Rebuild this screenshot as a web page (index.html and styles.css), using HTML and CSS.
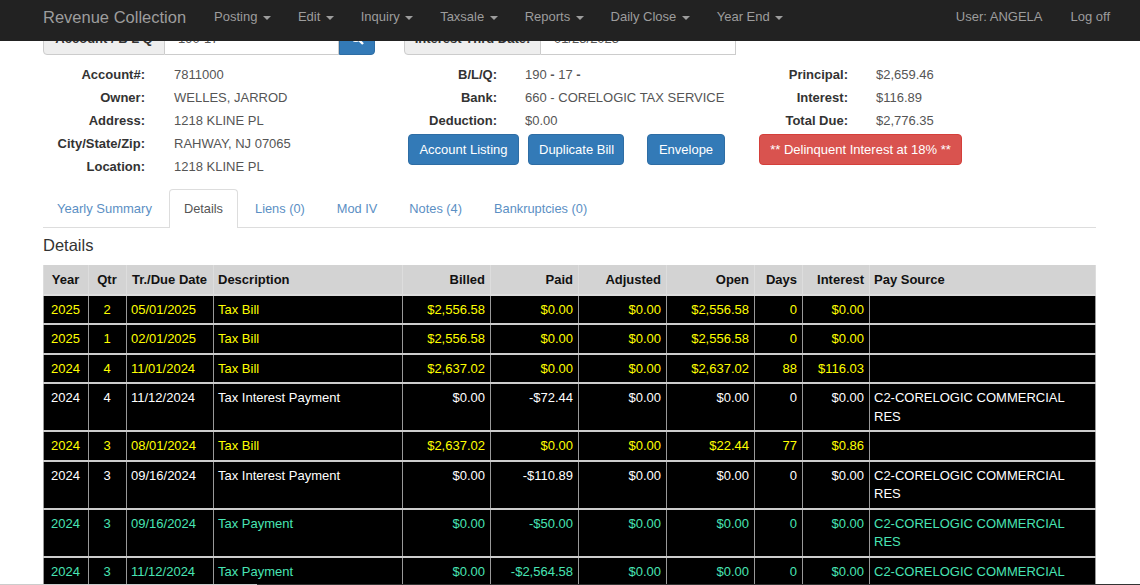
FILE: index.html
```html
<!DOCTYPE html>
<html>
<head>
  <meta charset="UTF-8">
  <title>Revenue Collection</title>
  <link rel="stylesheet" href="styles.css">
</head>
<body>
  <!-- Top navigation, sits over the scrolled page -->
  <nav class="navbar">
    <a class="brand">Revenue Collection</a>
    <ul class="nav-menu">
      <li>Posting <span class="caret"></span></li>
      <li>Edit <span class="caret"></span></li>
      <li>Inquiry <span class="caret"></span></li>
      <li>Taxsale <span class="caret"></span></li>
      <li>Reports <span class="caret"></span></li>
      <li>Daily Close <span class="caret"></span></li>
      <li>Year End <span class="caret"></span></li>
    </ul>
    <ul class="nav-right">
      <li>User: ANGELA</li>
      <li>Log off</li>
    </ul>
  </nav>

  <div class="page">
    <div class="search-row">
      <div class="input-group group-account">
        <span class="addon addon-account">Account / B L Q</span>
        <span class="field">190-17</span>
        <span class="search-btn">
          <svg width="14" height="14" viewBox="0 0 14 14"><circle cx="5.8" cy="5.8" r="4.2" fill="none" stroke="#fff" stroke-width="2"/><path d="M8.8 8.8L13 13" stroke="#fff" stroke-width="2.4"/></svg>
        </span>
      </div>
      <div class="input-group group-date">
        <span class="addon addon-date">Interest Thru Date:</span>
        <span class="field">01/25/2025</span>
      </div>
    </div>

    <div class="info">
      <dl class="facts facts-account">
        <dt>Account#:</dt><dd>7811000</dd>
        <dt>Owner:</dt><dd>WELLES, JARROD</dd>
        <dt>Address:</dt><dd>1218 KLINE PL</dd>
        <dt>City/State/Zip:</dt><dd>RAHWAY, NJ 07065</dd>
        <dt>Location:</dt><dd>1218 KLINE PL</dd>
      </dl>
      <div class="info-right">
        <div class="info-columns">
          <dl class="facts facts-bill">
            <dt>B/L/Q:</dt><dd>190 <b>-</b> 17 <b>-</b></dd>
            <dt>Bank:</dt><dd>660 - CORELOGIC TAX SERVICE</dd>
            <dt>Deduction:</dt><dd>$0.00</dd>
          </dl>
          <dl class="facts facts-due">
            <dt>Principal:</dt><dd>$2,659.46</dd>
            <dt>Interest:</dt><dd>$116.89</dd>
            <dt>Total Due:</dt><dd>$2,776.35</dd>
          </dl>
        </div>
        <div class="actions">
          <button class="btn btn-listing">Account Listing</button>
          <button class="btn btn-duplicate">Duplicate Bill</button>
          <button class="btn btn-envelope">Envelope</button>
          <button class="btn btn-danger">** Delinquent Interest at 18% **</button>
        </div>
      </div>
    </div>

    <ul class="tabs">
      <li>Yearly Summary</li>
      <li class="active">Details</li>
      <li>Liens (0)</li>
      <li>Mod IV</li>
      <li>Notes (4)</li>
      <li>Bankruptcies (0)</li>
    </ul>

    <h4 class="section-title">Details</h4>

    <table class="ledger">
      <colgroup>
        <col class="c-year"><col class="c-qtr"><col class="c-date"><col class="c-desc">
        <col class="c-money"><col class="c-money"><col class="c-money"><col class="c-money">
        <col class="c-days"><col class="c-int"><col>
      </colgroup>
      <thead>
        <tr>
          <th class="center">Year</th><th class="center">Qtr</th><th class="center">Tr./Due Date</th><th>Description</th>
          <th class="num">Billed</th><th class="num">Paid</th><th class="num">Adjusted</th><th class="num">Open</th>
          <th class="num">Days</th><th class="num">Interest</th><th>Pay Source</th>
        </tr>
      </thead>
      <tbody>
        <tr class="bill">
          <td class="center">2025</td><td class="center">2</td><td>05/01/2025</td><td>Tax Bill</td>
          <td class="num">$2,556.58</td><td class="num">$0.00</td><td class="num">$0.00</td><td class="num">$2,556.58</td>
          <td class="num">0</td><td class="num">$0.00</td><td></td>
        </tr>
        <tr class="bill">
          <td class="center">2025</td><td class="center">1</td><td>02/01/2025</td><td>Tax Bill</td>
          <td class="num">$2,556.58</td><td class="num">$0.00</td><td class="num">$0.00</td><td class="num">$2,556.58</td>
          <td class="num">0</td><td class="num">$0.00</td><td></td>
        </tr>
        <tr class="bill">
          <td class="center">2024</td><td class="center">4</td><td>11/01/2024</td><td>Tax Bill</td>
          <td class="num">$2,637.02</td><td class="num">$0.00</td><td class="num">$0.00</td><td class="num">$2,637.02</td>
          <td class="num">88</td><td class="num">$116.03</td><td></td>
        </tr>
        <tr class="interest">
          <td class="center">2024</td><td class="center">4</td><td>11/12/2024</td><td>Tax Interest Payment</td>
          <td class="num">$0.00</td><td class="num">-$72.44</td><td class="num">$0.00</td><td class="num">$0.00</td>
          <td class="num">0</td><td class="num">$0.00</td><td>C2-CORELOGIC COMMERCIAL RES</td>
        </tr>
        <tr class="bill">
          <td class="center">2024</td><td class="center">3</td><td>08/01/2024</td><td>Tax Bill</td>
          <td class="num">$2,637.02</td><td class="num">$0.00</td><td class="num">$0.00</td><td class="num">$22.44</td>
          <td class="num">77</td><td class="num">$0.86</td><td></td>
        </tr>
        <tr class="interest">
          <td class="center">2024</td><td class="center">3</td><td>09/16/2024</td><td>Tax Interest Payment</td>
          <td class="num">$0.00</td><td class="num">-$110.89</td><td class="num">$0.00</td><td class="num">$0.00</td>
          <td class="num">0</td><td class="num">$0.00</td><td>C2-CORELOGIC COMMERCIAL RES</td>
        </tr>
        <tr class="payment">
          <td class="center">2024</td><td class="center">3</td><td>09/16/2024</td><td>Tax Payment</td>
          <td class="num">$0.00</td><td class="num">-$50.00</td><td class="num">$0.00</td><td class="num">$0.00</td>
          <td class="num">0</td><td class="num">$0.00</td><td>C2-CORELOGIC COMMERCIAL RES</td>
        </tr>
        <tr class="payment">
          <td class="center">2024</td><td class="center">3</td><td>11/12/2024</td><td>Tax Payment</td>
          <td class="num">$0.00</td><td class="num">-$2,564.58</td><td class="num">$0.00</td><td class="num">$0.00</td>
          <td class="num">0</td><td class="num">$0.00</td><td>C2-CORELOGIC COMMERCIAL</td>
        </tr>
      </tbody>
    </table>
  </div>

  <div class="window-edge"></div>
</body>
</html>
```

FILE: styles.css
```css
body {
  margin: 0;
  height: 585px;
  overflow: hidden;
  background: #fff;
  color: #333;
  font-family: "Liberation Sans", Arial, sans-serif;
  font-size: 13px;
  line-height: 18px;
}

ul {
  margin: 0;
  padding: 0;
  list-style: none;
}

/* navbar */
.navbar {
  position: fixed;
  top: 0;
  left: 0;
  right: 0;
  height: 41px;
  box-sizing: border-box;
  z-index: 10;
  display: flex;
  align-items: center;
  padding: 0 30px 7px 43px;
  background: #222;
  color: #9d9d9d;
  white-space: nowrap;
}

.brand {
  font-size: 16.5px;
  margin-right: 28px;
}

.nav-menu {
  display: flex;
  gap: 26.8px;
}

.nav-right {
  display: flex;
  gap: 28px;
  margin-left: auto;
}

.caret {
  display: inline-block;
  margin-left: 2px;
  vertical-align: middle;
  border-top: 4px solid #9d9d9d;
  border-left: 4px solid transparent;
  border-right: 4px solid transparent;
}

/* page */
.page {
  width: 1053px;
  margin-left: 43px;
  padding-top: 21px;
}

.search-row {
  display: flex;
  gap: 29px;
}

.input-group {
  display: flex;
  height: 34px;
  box-sizing: border-box;
}

.group-account,
.group-date {
  width: 332px;
}

.addon {
  box-sizing: border-box;
  display: flex;
  align-items: center;
  justify-content: center;
  padding-top: 2px;
  font-weight: bold;
  background: #eee;
  border: 1px solid #ccc;
  border-radius: 4px 0 0 4px;
  white-space: nowrap;
}

.addon-account {
  width: 122px;
}

.addon-date {
  width: 137px;
}

.field {
  flex: 1;
  display: flex;
  align-items: center;
  padding: 2px 0 0 13px;
  color: #555;
  border: 1px solid #ccc;
  border-left: none;
}

.search-btn {
  width: 36px;
  display: flex;
  align-items: center;
  justify-content: center;
  background: #337ab7;
  border: 1px solid #2e6da4;
  border-radius: 0 4px 4px 0;
  box-sizing: border-box;
}

/* account info */
.info {
  display: grid;
  grid-template-columns: 361px 1fr;
  margin-top: 8px;
}

.facts {
  display: grid;
  grid-auto-rows: 23px;
  align-items: center;
  margin: 0;
}

.facts dt {
  font-weight: bold;
  text-align: right;
}

.facts dd {
  margin: 0;
  color: #555;
  white-space: nowrap;
}

.facts-account {
  grid-template-columns: 102px 1fr;
  column-gap: 29px;
}

.facts-bill {
  grid-template-columns: 93px 1fr;
  column-gap: 28px;
  width: 354px;
}

.facts-due {
  grid-template-columns: 90px 1fr;
  column-gap: 28px;
}

.info-columns {
  display: flex;
}

.actions {
  display: flex;
  margin: 2px 0 0 4px;
}

.btn {
  height: 31px;
  padding: 0 10px;
  font: inherit;
  color: #fff;
  background: #337ab7;
  border: 1px solid #2e6da4;
  border-radius: 4px;
  white-space: nowrap;
}

.btn-listing {
  width: 111px;
}

.btn-duplicate {
  width: 96px;
  margin-left: 9px;
}

.btn-envelope {
  width: 78px;
  margin-left: 23px;
}

.btn-danger {
  width: 203px;
  margin-left: 34px;
  background: #d9534f;
  border-color: #d43f3a;
}

/* tabs */
.tabs {
  display: flex;
  gap: 2px;
  margin-top: 11px;
  border-bottom: 1px solid #ddd;
  font-size: 12.8px;
  color: #5b8fc4;
}

.tabs li {
  padding: 10px 14px;
  margin-bottom: -1px;
  border: 1px solid transparent;
  border-bottom: none;
}

.tabs li:first-child {
  margin-left: -1px;
  font-size: 13px;
}

.tabs li.active {
  color: #555;
  background: #fff;
  border-color: #ddd;
  border-radius: 4px 4px 0 0;
}

.section-title {
  margin: 7px 0 10px;
  font-size: 16.5px;
  font-weight: normal;
  line-height: 20px;
}

/* ledger table */
.ledger {
  width: 1053px;
  table-layout: fixed;
  border-collapse: collapse;
  background: #000;
}

.c-year { width: 45px; }
.c-qtr { width: 38px; }
.c-date { width: 87px; }
.c-desc { width: 189px; }
.c-money { width: 88px; }
.c-days { width: 48px; }
.c-int { width: 67px; }

.ledger th,
.ledger td {
  padding: 5px 5px 4px 4px;
  line-height: 18.5px;
  text-align: left;
  vertical-align: top;
  border-left: 1px solid #999;
  border-right: 1px solid #999;
  border-top: 2px solid #ccc;
  border-bottom: 2px solid #ccc;
}

.ledger th {
  padding-top: 6px;
  padding-bottom: 4px;
  background: #d3d3d3;
  color: #111;
  border-color: #ddd;
  border-top: none;
  white-space: nowrap;
}

.ledger th.num,
.ledger td.num {
  text-align: right;
}

.ledger th.center,
.ledger td.center {
  text-align: center;
}

.bill td {
  color: #ff0;
}

.interest td {
  color: #fff;
}

.payment td {
  color: #48e4b4;
}

/* one pixel of whatever was under the captured window */
.window-edge {
  position: fixed;
  left: 0;
  right: 0;
  bottom: 0;
  height: 1px;
  background: linear-gradient(90deg, #ccc 257px, #333 257px);
}
```
